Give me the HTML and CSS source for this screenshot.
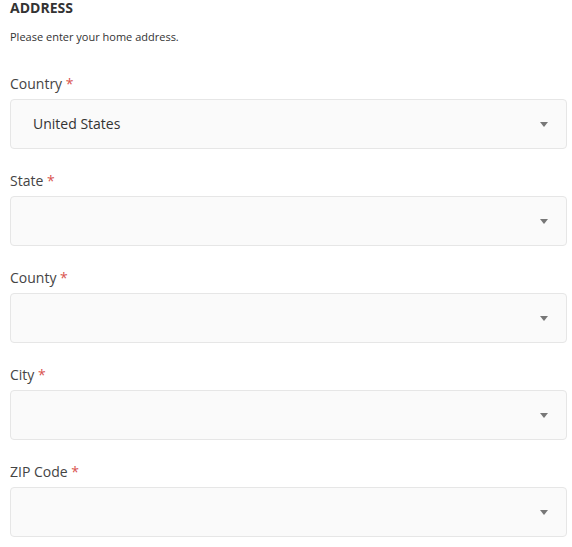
FILE: index.html
```html
<!DOCTYPE html>
<html>
<head>
<meta charset="utf-8">
<link rel="stylesheet" href="styles.css">
</head>
<body>
<div class="form">
  <h2 class="title">ADDRESS</h2>
  <p class="desc">Please enter your home address.</p>
  <div class="field">
    <label class="label">Country <span class="req">*</span></label>
    <div class="select"><span class="value">United States</span><span class="caret"></span></div>
  </div>
  <div class="field">
    <label class="label">State <span class="req">*</span></label>
    <div class="select"><span class="value"></span><span class="caret"></span></div>
  </div>
  <div class="field">
    <label class="label">County <span class="req">*</span></label>
    <div class="select"><span class="value"></span><span class="caret"></span></div>
  </div>
  <div class="field">
    <label class="label">City <span class="req">*</span></label>
    <div class="select"><span class="value"></span><span class="caret"></span></div>
  </div>
  <div class="field">
    <label class="label">ZIP Code <span class="req">*</span></label>
    <div class="select"><span class="value"></span><span class="caret"></span></div>
  </div>
</div>
</body>
</html>
```
FILE: styles.css
```css
html, body {
  margin: 0;
  padding: 0;
  background: #ffffff;
}
body {
  font-family: "Open Sans", "Liberation Sans", sans-serif;
  color: #333333;
}
.form {
  margin-left: 10px;
  width: 557px;
}
.title {
  margin: 0;
  font-size: 14px;
  line-height: 15px;
  font-weight: 700;
  color: #333333;
}
.desc {
  margin: 14px 0 0 0;
  font-size: 11px;
  line-height: 16px;
  color: #333333;
}
.field {
  margin-top: 29px;
}
.field + .field {
  margin-top: 22px;
}
.label {
  display: block;
  font-size: 14px;
  line-height: 20px;
  color: #444444;
  margin-bottom: 5px;
}
.req {
  color: #d9534f;
}
.select {
  box-sizing: border-box;
  height: 50px;
  border: 1px solid #e6e6e6;
  border-radius: 4px;
  background: #fafafa;
  display: flex;
  align-items: center;
  justify-content: space-between;
  padding: 0 18px 0 22px;
}
.value {
  font-size: 14px;
  line-height: 20px;
  color: #333333;
}
.caret {
  width: 0;
  height: 0;
  border-left: 4px solid transparent;
  border-right: 4px solid transparent;
  border-top: 5px solid #777777;
  margin-top: 1px;
}
```
